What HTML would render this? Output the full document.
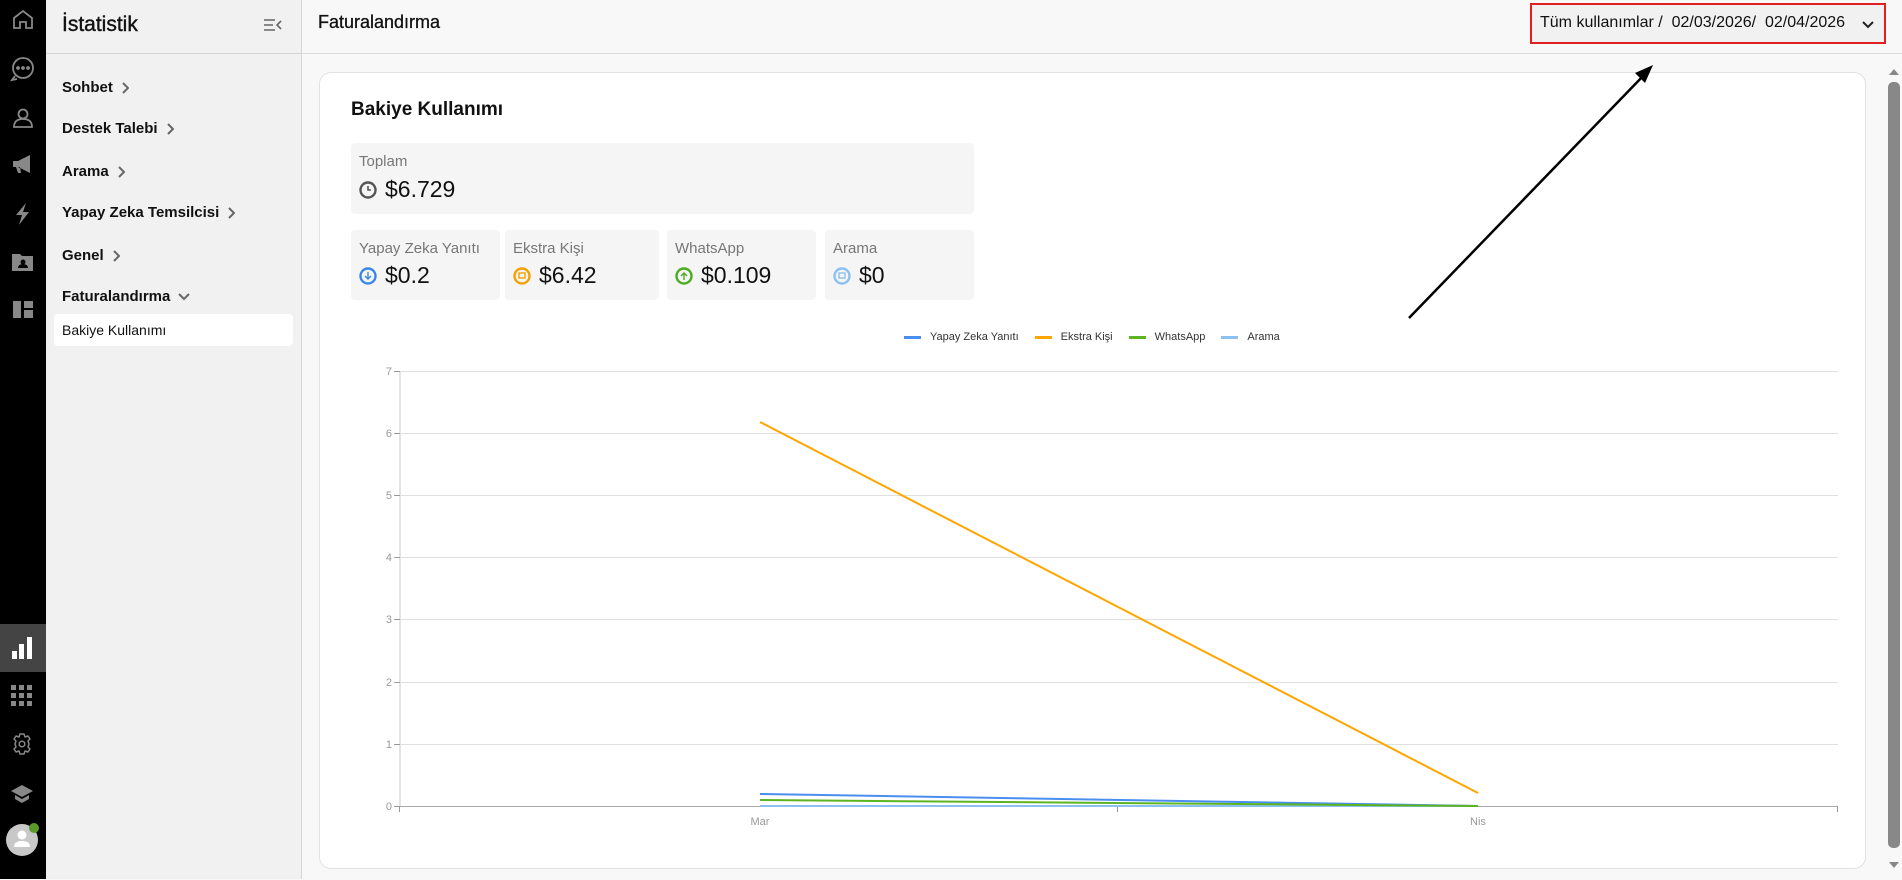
<!DOCTYPE html>
<html><head><meta charset="utf-8"><style>
*{box-sizing:border-box;margin:0;padding:0}
body{width:1902px;height:879px;overflow:hidden;background:#f8f8f8;font-family:"Liberation Sans",Arial,sans-serif;position:relative;color:#111}
.abs{position:absolute}
#bar{left:0;top:0;width:46px;height:879px;background:#000}
#side{left:46px;top:0;width:256px;height:879px;background:#f1f1f1;border-right:1px solid #d6d6d6}
.mi{position:absolute;left:16px;font-size:15px;font-weight:bold;color:#111}
.mi svg{vertical-align:middle;margin-left:8px}
.box{position:absolute;background:#f5f5f5;border-radius:4px}
.lbl{position:absolute;left:8px;top:10px;font-size:15px;color:#777}
.val{position:absolute;left:8px;font-size:23px;color:#111;display:flex;align-items:center;gap:8px}
</style></head><body>
<div id="bar" class="abs">
<svg class="abs" style="left:0;top:0" width="46" height="879" fill="none" stroke="#888" stroke-width="1.8">
 <path d="M14 28V18l9-7 9 7v10h-6v-6h-6v6z" />
 <circle cx="23" cy="68" r="10"/><path d="M15 76l-3 4 5-1"/>
 <circle cx="18" cy="68" r="1" fill="#888"/><circle cx="23" cy="68" r="1" fill="#888"/><circle cx="28" cy="68" r="1" fill="#888"/>
 <circle cx="23" cy="114" r="4.5"/><path d="M14 127c0-6 4-8 9-8s9 2 9 8z"/>
 <path d="M13 161h5l12-6v18l-12-6h-5z M16 167l2 6h3l-1-6" fill="#888" stroke="none"/>
 <path d="M26 203l-10 12h6l-3 10 10-13h-6z" fill="#888" stroke="none"/>
 <path d="M12 254h8l2 2h11v15H12z" fill="#888" stroke="none"/>
 <circle cx="23" cy="262" r="2.5" fill="#000" stroke="none"/><path d="M18 268c0-3 3-4 5-4s5 1 5 4z" fill="#000" stroke="none"/>
 <path d="M13 301h8v17h-8z M24 301h9v7h-9z M24 310h9v8h-9z" fill="#888" stroke="none"/>
</svg>
<div class="abs" style="left:0;top:624px;width:46px;height:48px;background:#444"></div>
<svg class="abs" style="left:0;top:624px" width="46" height="48"><rect x="12" y="27" width="5" height="8" fill="#fff"/><rect x="19" y="20" width="5" height="15" fill="#fff"/><rect x="27" y="13" width="5" height="22" fill="#fff"/></svg>
<svg class="abs" style="left:0;top:680px" width="46" height="200" fill="#888">
 <g><rect x="11" y="5" width="5" height="5"/><rect x="19" y="5" width="5" height="5"/><rect x="27" y="5" width="5" height="5"/><rect x="11" y="13" width="5" height="5"/><rect x="19" y="13" width="5" height="5"/><rect x="27" y="13" width="5" height="5"/><rect x="11" y="21" width="5" height="5"/><rect x="19" y="21" width="5" height="5"/><rect x="27" y="21" width="5" height="5"/></g>
 <path d="M20 54h4l1 3 3-1 2 3-2 2 1 3-1 3 2 2-2 3-3-1-1 3h-4l-1-3-3 1-2-3 2-2-1-3 1-3-2-2 2-3 3 1z" fill="none" stroke="#888" stroke-width="1.5" stroke-linejoin="round"/>
 <circle cx="22" cy="64" r="2.8" fill="none" stroke="#888" stroke-width="1.5"/>
 <path d="M11 111l11-6 11 6-11 6z"/><path d="M15 115v4l7 4 7-4v-4l-7 4z"/>
 <circle cx="22" cy="160" r="16" fill="#c8c8c8"/><circle cx="22" cy="155" r="4.5" fill="#fff"/><path d="M14 167c0-5 4-6 8-6s8 1 8 6z" fill="#fff"/>
 <circle cx="34" cy="148" r="5" fill="#5a9a2a"/>
</svg>
</div>
<div id="side" class="abs">
 <div class="abs" style="left:16px;top:13px;font-size:21px;color:#111;-webkit-text-stroke:0.4px #111">İstatistik</div>
 <svg class="abs" style="left:218px;top:19px" width="18" height="12" stroke="#666" stroke-width="1.6" fill="none"><path d="M0 1h11M0 6h9M0 11h11M17 2l-4 4 4 4"/></svg>
 <div class="abs" style="left:0;top:53px;width:256px;border-top:1px solid #d6d6d6"></div>
 <div class="mi" style="top:79px">Sohbet<svg width="8" height="12" fill="none" stroke="#666" stroke-width="2"><path d="M2 1l5 5-5 5"/></svg></div>
 <div class="mi" style="top:120px">Destek Talebi<svg width="8" height="12" fill="none" stroke="#666" stroke-width="2"><path d="M2 1l5 5-5 5"/></svg></div>
 <div class="mi" style="top:163px">Arama<svg width="8" height="12" fill="none" stroke="#666" stroke-width="2"><path d="M2 1l5 5-5 5"/></svg></div>
 <div class="mi" style="top:204px">Yapay Zeka Temsilcisi<svg width="8" height="12" fill="none" stroke="#666" stroke-width="2"><path d="M2 1l5 5-5 5"/></svg></div>
 <div class="mi" style="top:247px">Genel<svg width="8" height="12" fill="none" stroke="#666" stroke-width="2"><path d="M2 1l5 5-5 5"/></svg></div>
 <div class="mi" style="top:288px">Faturalandırma<svg width="12" height="8" fill="none" stroke="#666" stroke-width="2"><path d="M1 1l5 5 5-5"/></svg></div>
 <div class="abs" style="left:8px;top:314px;width:239px;height:32px;background:#fff;border-radius:4px;font-size:14px;padding:8px 8px;color:#111">Bakiye Kullanımı</div>
</div>
<div class="abs" style="left:318px;top:12px;font-size:18px;color:#111;-webkit-text-stroke:0.3px #111">Faturalandırma</div>
<div class="abs" style="left:302px;top:53px;width:1600px;border-top:1px solid #ddd"></div>
<div class="abs" style="left:1530px;top:3px;width:356px;height:41px;border:2px solid #e02020;background:#f1f1f1;font-size:16px;padding:9px 0 0 8px;color:#111;white-space:nowrap">Tüm kullanımlar /&nbsp; 02/03/2026/&nbsp; 02/04/2026<svg style="position:absolute;right:10px;top:16px" width="12" height="8" fill="none" stroke="#222" stroke-width="2"><path d="M1 1l5 5 5-5"/></svg></div>
<div class="abs" style="left:319px;top:72px;width:1547px;height:797px;background:#fff;border:1px solid #e2e2e2;border-radius:12px"></div>
<div class="abs" style="left:351px;top:99px;font-size:19px;font-weight:bold;color:#111">Bakiye Kullanımı</div>
<div class="box" style="left:351px;top:143px;width:623px;height:71px"><div class="lbl">Toplam</div><div class="val" style="top:33px"><svg width="18" height="18" fill="none" stroke="#555" stroke-width="2.4"><circle cx="9" cy="9" r="7.5"/><path d="M9 5v4h3" stroke-width="1.6"/></svg>$6.729</div></div>
<div class="box" style="left:351px;top:230px;width:149px;height:70px"><div class="lbl">Yapay Zeka Yanıtı</div><div class="val" style="top:32px"><svg width="18" height="18" fill="none" stroke="#3a86e8" stroke-width="2.4"><circle cx="9" cy="9" r="7.5"/><path d="M9 5v7M6 9l3 3 3-3" stroke-width="1.4"/></svg>$0.2</div></div>
<div class="box" style="left:505px;top:230px;width:154px;height:70px"><div class="lbl">Ekstra Kişi</div><div class="val" style="top:32px"><svg width="18" height="18" fill="none" stroke="#f5a000" stroke-width="2.4"><circle cx="9" cy="9" r="7.5"/><rect x="6" y="6" width="6" height="5" stroke-width="1.4"/></svg>$6.42</div></div>
<div class="box" style="left:667px;top:230px;width:149px;height:70px"><div class="lbl">WhatsApp</div><div class="val" style="top:32px"><svg width="18" height="18" fill="none" stroke="#4aae20" stroke-width="2.4"><circle cx="9" cy="9" r="7.5"/><path d="M9 13V6M6 9l3-3 3 3" stroke-width="1.4"/></svg>$0.109</div></div>
<div class="box" style="left:825px;top:230px;width:149px;height:70px"><div class="lbl">Arama</div><div class="val" style="top:32px"><svg width="18" height="18" fill="none" stroke="#8cc0f2" stroke-width="2.4"><circle cx="9" cy="9" r="7.5"/><rect x="6" y="6" width="6" height="5" stroke-width="1.4"/></svg>$0</div></div>
<div class="abs" style="left:904px;top:331px;font-size:11px;color:#333;display:flex;white-space:nowrap;align-items:center">
<span style="display:inline-block;width:17px;height:3px;background:#4a8ef0;margin-right:9px"></span>Yapay Zeka Yanıtı
<span style="display:inline-block;width:17px;height:3px;background:#ffa500;margin:0 9px 0 16px"></span>Ekstra Kişi
<span style="display:inline-block;width:17px;height:3px;background:#5cb520;margin:0 9px 0 16px"></span>WhatsApp
<span style="display:inline-block;width:17px;height:3px;background:#8cc0f2;margin:0 9px 0 16px"></span>Arama
</div>
<svg class="abs" style="left:0;top:0" width="1902" height="879">
 <g stroke="#e0e0e0" stroke-width="1">
  <line x1="400" y1="371.5" x2="1838" y2="371.5"/><line x1="400" y1="433.5" x2="1838" y2="433.5"/><line x1="400" y1="495.5" x2="1838" y2="495.5"/><line x1="400" y1="557.5" x2="1838" y2="557.5"/><line x1="400" y1="619.5" x2="1838" y2="619.5"/><line x1="400" y1="682.5" x2="1838" y2="682.5"/><line x1="400" y1="744.5" x2="1838" y2="744.5"/>
 </g>
 <line x1="400" y1="371" x2="400" y2="806" stroke="#e4e4e4" stroke-width="2"/>
 <g stroke="#999"><line x1="394" y1="371.5" x2="400" y2="371.5"/><line x1="394" y1="433.5" x2="400" y2="433.5"/><line x1="394" y1="495.5" x2="400" y2="495.5"/><line x1="394" y1="557.5" x2="400" y2="557.5"/><line x1="394" y1="619.5" x2="400" y2="619.5"/><line x1="394" y1="682.5" x2="400" y2="682.5"/><line x1="394" y1="744.5" x2="400" y2="744.5"/><line x1="394" y1="806.5" x2="400" y2="806.5"/>
 <line x1="400" y1="806.5" x2="1837" y2="806.5" stroke="#aaa"/><line x1="399.5" y1="806" x2="399.5" y2="812"/><line x1="1117.5" y1="806" x2="1117.5" y2="812"/><line x1="1837.5" y1="806" x2="1837.5" y2="812"/></g>
 <g font-family="Liberation Sans" font-size="11" fill="#999" text-anchor="end">
  <text x="392" y="375">7</text><text x="392" y="437">6</text><text x="392" y="499">5</text><text x="392" y="561">4</text><text x="392" y="623">3</text><text x="392" y="686">2</text><text x="392" y="748">1</text><text x="392" y="810">0</text>
 </g>
 <g font-family="Liberation Sans" font-size="11" fill="#999" text-anchor="middle"><text x="760" y="825">Mar</text><text x="1478" y="825">Nis</text></g>
 <line x1="760" y1="806" x2="1478" y2="806" stroke="#8cc0f2" stroke-width="2"/>
 <line x1="760" y1="794" x2="1478" y2="806" stroke="#4a8ef0" stroke-width="2"/>
 <line x1="760" y1="800" x2="1478" y2="806" stroke="#5cb520" stroke-width="2"/>
 <line x1="760" y1="422" x2="1478" y2="793" stroke="#ffa500" stroke-width="2"/>
 <line x1="1409" y1="318" x2="1645" y2="74" stroke="#000" stroke-width="2.5"/>
 <path d="M1653 65l-18 8 10 10z" fill="#000"/>
 <rect x="1888" y="82" width="12" height="766" rx="5" fill="#888"/>
 <path d="M1889 75l5-6 5 6z M1889 862l5 6 5-6z" fill="#888"/>
</svg>
</body></html>
